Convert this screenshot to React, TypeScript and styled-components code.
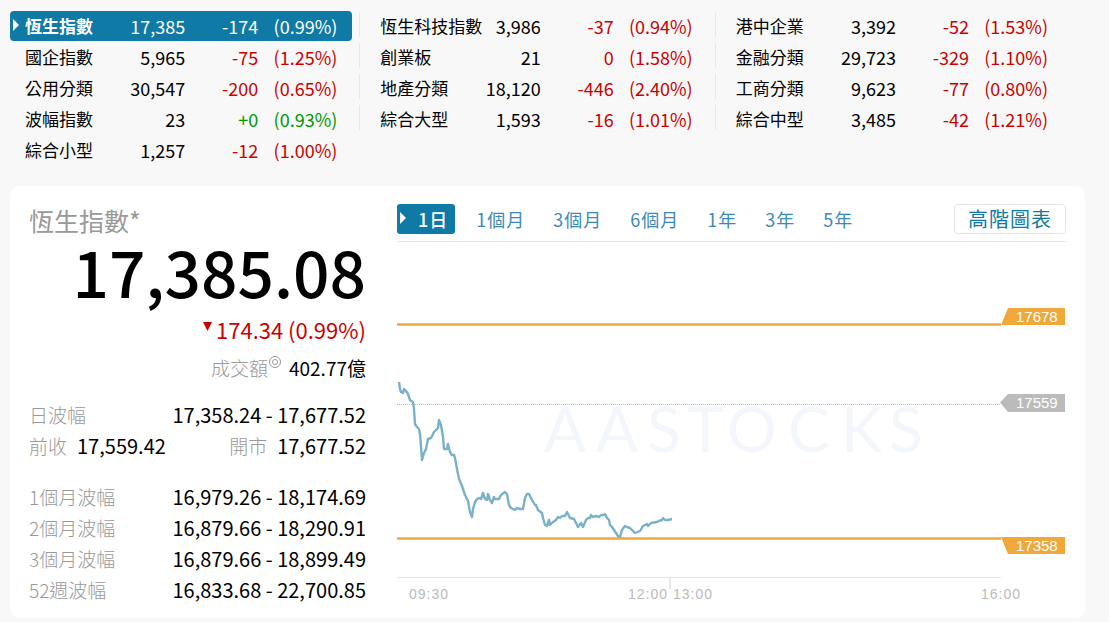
import React, { useState } from "react";
import styled, { createGlobalStyle } from "styled-components";

const GlobalStyle = createGlobalStyle`
  *, *::before, *::after { box-sizing: border-box; }
  body {
    margin: 0;
    background: #f8f8f8;
    color: #000;
    font-family: "Noto Sans CJK TC", "Noto Sans", sans-serif;
  }
`;

const Page = styled.main`
  padding: 11px 24px 5px 10px;
`;

const Indices = styled.section`
  display: grid;
  grid-template-columns: repeat(3, 1fr);
  padding-right: 9px;
`;

const IndexGroup = styled.div`
  display: flex;
  align-items: flex-start;
`;

const IndexTable = styled.table`
  flex: 1;
  min-width: 0;
  table-layout: fixed;
  border-collapse: separate;
  border-spacing: 0 1px;
  margin: -1px 0;
  font-size: 18px;
  line-height: 28px;
  white-space: nowrap;
`;

const ValueCol = styled.col`
  width: 56px;
`;
const ChangeCol = styled.col`
  width: 73px;
`;
const PercentCol = styled.col`
  width: 94px;
`;

const NameCell = styled.th`
  padding: 1px 0 1px 15px;
  font-size: 17px;
  font-weight: 400;
  text-align: left;
`;

const NumberCell = styled.td<{ $tone?: Tone }>`
  padding: 1px 0;
  text-align: right;
  color: ${({ $tone }) => ($tone === "up" ? "#009900" : $tone === "down" ? "#cc0000" : "inherit")};
  &:last-child {
    padding-right: 15px;
  }
`;

const Marker = styled.svg`
  position: absolute;
  left: 3px;
  top: 8px;
  width: 6px;
  height: 12px;
  fill: #fff;
`;

const IndexRow = styled.tr<{ $active: boolean }>`
  position: relative;
  ${({ $active }) =>
    $active &&
    `
    color: #fff;
    th, td { background: #107aa6; color: #fff; }
    th { font-weight: 700; border-radius: 4px 0 0 4px; }
    td:last-child { border-radius: 0 4px 4px 0; }
  `}
`;

const Rules = styled.div`
  display: grid;
  gap: 6px;
  margin: 1px 5px 0 7px;
`;

const Rule = styled.span<{ $visible: boolean }>`
  width: 1px;
  height: 25px;
  background: ${({ $visible }) => ($visible ? "#ece4e6" : "transparent")};
`;

const Card = styled.section`
  display: grid;
  grid-template-columns: 337px 1fr;
  column-gap: 31px;
  margin-top: 21px;
  padding: 17px 19px 13px 19px;
  background: #fff;
  border-radius: 10px;
`;

const Summary = styled.div`
  text-align: right;
`;

const Title = styled.h1`
  margin: 0;
  font-size: 25px;
  line-height: 34px;
  font-weight: 400;
  text-align: left;
  color: #999;
`;

const Price = styled.p`
  margin: 0;
  font-size: 64px;
  line-height: 66px;
  font-weight: 500;
`;

const Change = styled.p`
  display: flex;
  justify-content: flex-end;
  align-items: center;
  gap: 4px;
  margin: 6px 0 2px;
  font-size: 22px;
  line-height: 40px;
  color: #cc0000;
`;

const DownArrow = styled.svg`
  width: 9px;
  height: 9px;
  margin-bottom: 6px;
  fill: currentColor;
`;

const Facts = styled.dl<{ $gap: number }>`
  margin: ${({ $gap }) => $gap}px 0 0;
`;

const FactRow = styled.div`
  display: flex;
  justify-content: space-between;
  line-height: 31px;
`;

const Turnover = styled(FactRow)`
  justify-content: flex-end;
  gap: 8px;
  line-height: 34px;
`;

const Fact = styled.div`
  display: flex;
  gap: 10px;
`;

const FactName = styled.dt`
  font-size: 19px;
  font-weight: 300;
  color: #999;
`;

const FactValue = styled.dd<{ $compact?: boolean }>`
  margin: 0;
  font-size: ${({ $compact }) => ($compact ? 19 : 20)}px;
`;

const Ring = styled.svg`
  width: 12px;
  height: 12px;
  margin-left: 1px;
  vertical-align: 8px;
  fill: none;
  stroke: #999;
`;

const ChartPanel = styled.div`
  min-width: 0;
  padding-top: 1px;
`;

const Toolbar = styled.div`
  display: flex;
  justify-content: space-between;
  padding-bottom: 7px;
  border-bottom: 1px solid #e6e6e6;
`;

const Periods = styled.nav`
  display: flex;
`;

const PeriodButton = styled.button<{ $active: boolean }>`
  position: relative;
  height: 30px;
  padding: 0 7px 0 21px;
  border: 0;
  border-radius: 3px;
  background: ${({ $active }) => ($active ? "#107aa6" : "transparent")};
  color: ${({ $active }) => ($active ? "#fff" : "#3c8ab8")};
  font: ${({ $active }) => ($active ? 500 : 400)} 18px / 30px "Noto Sans CJK TC", sans-serif;
  letter-spacing: 1px;
  white-space: nowrap;
  cursor: pointer;
`;

const AdvancedLink = styled.a`
  height: 30px;
  padding: 0 13px;
  border: 1px solid #e6e6e6;
  border-radius: 4px;
  color: #107aa6;
  font-size: 20px;
  line-height: 28px;
  letter-spacing: 1px;
  text-decoration: none;
  white-space: nowrap;
`;

const Chart = styled.svg`
  display: block;
  width: 100%;
  height: auto;
  font-family: "Liberation Sans", Arial, sans-serif;
`;

const TagText = styled.text`
  fill: #fff;
  font-size: 15px;
`;

const TimeText = styled.text`
  fill: #bbb;
  font-size: 14px;
  letter-spacing: 1px;
`;

const Watermark = styled.text`
  fill: #f3f7fb;
  font-family: Lato, sans-serif;
  font-weight: 400;
  font-size: 62px;
`;

type Tone = "up" | "down";
type IndexQuote = [name: string, value: string, change: string, percent: string, tone?: Tone];

const groups: IndexQuote[][] = [
  [
    ["恆生指數", "17,385", "-174", "(0.99%)"],
    ["國企指數", "5,965", "-75", "(1.25%)"],
    ["公用分類", "30,547", "-200", "(0.65%)"],
    ["波幅指數", "23", "+0", "(0.93%)", "up"],
    ["綜合小型", "1,257", "-12", "(1.00%)"],
  ],
  [
    ["恆生科技指數", "3,986", "-37", "(0.94%)"],
    ["創業板", "21", "0", "(1.58%)"],
    ["地產分類", "18,120", "-446", "(2.40%)"],
    ["綜合大型", "1,593", "-16", "(1.01%)"],
  ],
  [
    ["港中企業", "3,392", "-52", "(1.53%)"],
    ["金融分類", "29,723", "-329", "(1.10%)"],
    ["工商分類", "9,623", "-77", "(0.80%)"],
    ["綜合中型", "3,485", "-42", "(1.21%)"],
  ],
];

const ranges = [
  ["1個月波幅", "16,979.26 - 18,174.69"],
  ["2個月波幅", "16,879.66 - 18,290.91"],
  ["3個月波幅", "16,879.66 - 18,899.49"],
  ["52週波幅", "16,833.68 - 22,700.85"],
];

const periods = ["1日", "1個月", "3個月", "6個月", "1年", "3年", "5年"];

// Intraday points in chart coordinates
const series =
  "2,140 3,147 4,150 6,151 7,147 9,149 11,152 13,158 16,160 17,167 18,182 20,185 22,187 23,192 25,218 27,211 29,207 31,197 34,196 37,190 40,187 41,186 42,178 44,183 46,195 47,207 50,207 51,202 53,210 55,213 57,213 58,216 60,227 62,237 65,244 68,253 71,259 73,270 75,275 76,267 78,260 80,257 82,256 84,257 86,251 88,257 90,258 91,252 93,258 95,261 97,255 98,257 102,257 104,253 108,250 110,252 112,263 114,266 118,268 120,266 123,267 126,267 128,256 130,252 132,252 135,258 138,263 139,263 141,268 145,271 146,276 148,283 150,284 152,278 153,283 156,280 159,278 161,275 163,276 165,274 168,274 170,270 173,276 177,277 179,281 181,285 184,281 186,285 189,278 191,276 193,276 194,273 196,275 199,274 202,275 204,273 207,273 208,272 210,276 212,278 213,283 215,285 217,288 219,291 221,294 223,295 225,288 228,284 230,285 233,286 235,288 238,291 243,289 246,284 250,282 251,284 254,281 260,280 262,279 265,278 266,276 268,278 271,278 275,277";

const RowMarker = () => (
  <Marker viewBox="0 0 6 12" aria-hidden="true">
    <path d="M0 0L6 6L0 12Z" />
  </Marker>
);

export default function App() {
  const [period, setPeriod] = useState("1日");
  return (
    <>
      <GlobalStyle />
      <Page>
        <Indices>
          {groups.map((group, g) => (
            <IndexGroup key={g}>
              <IndexTable>
                <colgroup>
                  <col />
                  <ValueCol />
                  <ChangeCol />
                  <PercentCol />
                </colgroup>
                <tbody>
                  {group.map(([name, value, change, percent, tone = "down"], i) => (
                    <IndexRow key={name} $active={g === 0 && i === 0}>
                      <NameCell scope="row">
                        {g === 0 && i === 0 && <RowMarker />}
                        {name}
                      </NameCell>
                      <NumberCell>{value}</NumberCell>
                      <NumberCell $tone={tone}>{change}</NumberCell>
                      <NumberCell $tone={tone}>{percent}</NumberCell>
                    </IndexRow>
                  ))}
                </tbody>
              </IndexTable>
              <Rules aria-hidden="true">
                {[0, 1, 2, 3].map((n) => (
                  <Rule key={n} $visible={g < 2} />
                ))}
              </Rules>
            </IndexGroup>
          ))}
        </Indices>

        <Card>
          <Summary>
            <Title>恆生指數*</Title>
            <Price>17,385.08</Price>
            <Change>
              <DownArrow viewBox="0 0 9 9" aria-hidden="true">
                <path d="M0 0H9L4.500 9Z" />
              </DownArrow>
              174.34 (0.99%)
            </Change>
            <Facts $gap={0}>
              <Turnover>
                <FactName>
                  成交額
                  <Ring viewBox="0 0 12 12" aria-hidden="true">
                    <circle cx="6" cy="6" r="5.5" />
                    <circle cx="6" cy="6" r="2.5" />
                  </Ring>
                </FactName>
                <FactValue $compact>402.77億</FactValue>
              </Turnover>
            </Facts>
            <Facts $gap={14}>
              <FactRow>
                <FactName>日波幅</FactName>
                <FactValue>17,358.24 - 17,677.52</FactValue>
              </FactRow>
              <FactRow>
                <Fact>
                  <FactName>前收</FactName>
                  <FactValue>17,559.42</FactValue>
                </Fact>
                <Fact>
                  <FactName>開市</FactName>
                  <FactValue>17,677.52</FactValue>
                </Fact>
              </FactRow>
            </Facts>
            <Facts $gap={20}>
              {ranges.map(([label, value]) => (
                <FactRow key={label}>
                  <FactName>{label}</FactName>
                  <FactValue>{value}</FactValue>
                </FactRow>
              ))}
            </Facts>
          </Summary>

          <ChartPanel>
            <Toolbar>
              <Periods>
                {periods.map((label) => (
                  <PeriodButton
                    key={label}
                    type="button"
                    $active={label === period}
                    onClick={() => setPeriod(label)}
                  >
                    {label === period && <RowMarker />}
                    {label}
                  </PeriodButton>
                ))}
              </Periods>
              <AdvancedLink href="#chart">高階圖表</AdvancedLink>
            </Toolbar>
            <Chart viewBox="0 0 669 363" role="img" aria-label="恆生指數 1日">
              <Watermark x="147 199 250 290 330 391 444 492" y="210">
                AASTOCKS
              </Watermark>
              <path d="M0 162H604" stroke="#bbb" strokeDasharray="1 1" transform="translate(0 .5)" />
              <path d="M0 82.5H604M0 296.5H604" stroke="#f1a83b" strokeWidth="2.5" />
              <path d="M0 335.5H604" stroke="#e6e6e6" />
              <path d="M273 336V347" stroke="#e9e9e9" strokeWidth="2" />
              <polyline points={series} fill="none" stroke="#7ab1ca" strokeWidth="2.4" strokeLinejoin="round" />
              <path d="M604 83L611 66H668V83Z" fill="#f1a83b" />
              <path d="M603 160.500L611 152H668V170H611Z" fill="#bbb" />
              <path d="M604 295H668V312H611Z" fill="#f1a83b" />
              <TagText x="619" y="80">17678</TagText>
              <TagText x="619" y="166">17559</TagText>
              <TagText x="619" y="309">17358</TagText>
              <TimeText x="12" y="357">09:30</TimeText>
              <TimeText x="231" y="357">12:00</TimeText>
              <TimeText x="276" y="357">13:00</TimeText>
              <TimeText x="584" y="357">16:00</TimeText>
            </Chart>
          </ChartPanel>
        </Card>
      </Page>
    </>
  );
}
